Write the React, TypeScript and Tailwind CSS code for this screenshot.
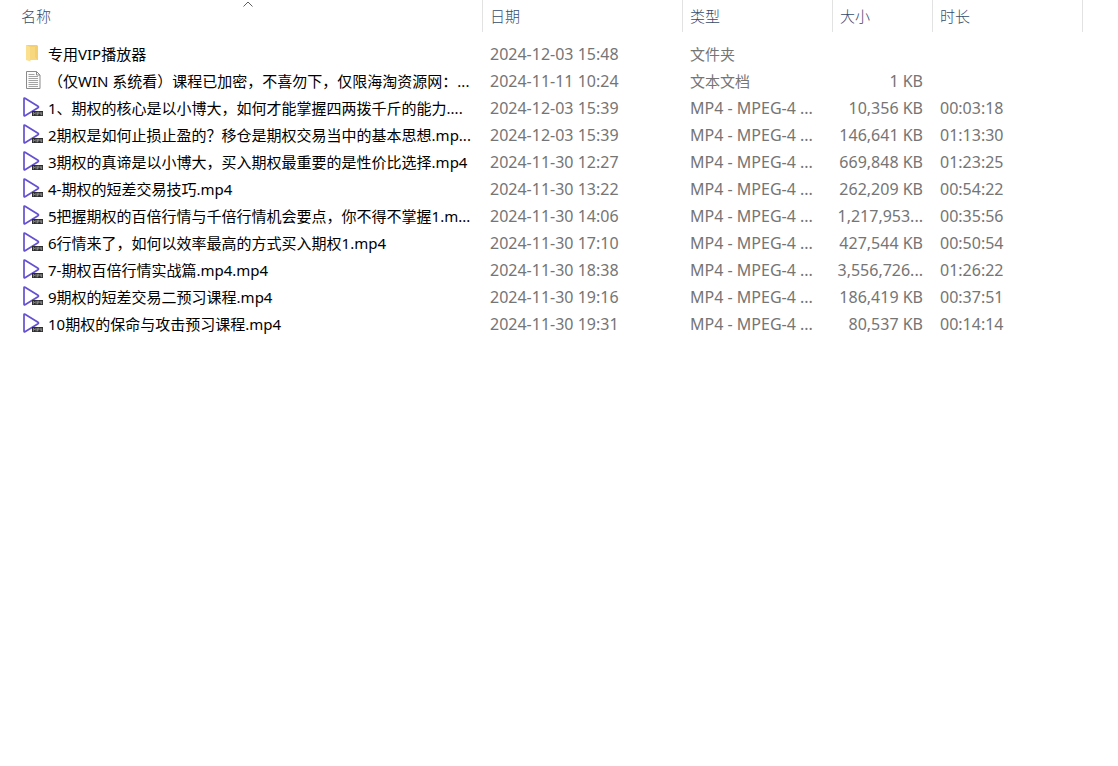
import clsx from 'clsx'

type Kind = 'folder' | 'text' | 'video'

type FileRow = {
  kind: Kind
  name: string
  date: string
  size: string
  duration: string
}

const files: FileRow[] = [
  { kind: 'folder', name: '专用VIP播放器', date: '2024-12-03 15:48', size: '', duration: '' },
  { kind: 'text', name: '（仅WIN 系统看）课程已加密，不喜勿下，仅限海淘资源网：...', date: '2024-11-11 10:24', size: '1 KB', duration: '' },
  { kind: 'video', name: '1、期权的核心是以小博大，如何才能掌握四两拨千斤的能力....', date: '2024-12-03 15:39', size: '10,356 KB', duration: '00:03:18' },
  { kind: 'video', name: '2期权是如何止损止盈的？移仓是期权交易当中的基本思想.mp...', date: '2024-12-03 15:39', size: '146,641 KB', duration: '01:13:30' },
  { kind: 'video', name: '3期权的真谛是以小博大，买入期权最重要的是性价比选择.mp4', date: '2024-11-30 12:27', size: '669,848 KB', duration: '01:23:25' },
  { kind: 'video', name: '4-期权的短差交易技巧.mp4', date: '2024-11-30 13:22', size: '262,209 KB', duration: '00:54:22' },
  { kind: 'video', name: '5把握期权的百倍行情与千倍行情机会要点，你不得不掌握1.m...', date: '2024-11-30 14:06', size: '1,217,953...', duration: '00:35:56' },
  { kind: 'video', name: '6行情来了，如何以效率最高的方式买入期权1.mp4', date: '2024-11-30 17:10', size: '427,544 KB', duration: '00:50:54' },
  { kind: 'video', name: '7-期权百倍行情实战篇.mp4.mp4', date: '2024-11-30 18:38', size: '3,556,726...', duration: '01:26:22' },
  { kind: 'video', name: '9期权的短差交易二预习课程.mp4', date: '2024-11-30 19:16', size: '186,419 KB', duration: '00:37:51' },
  { kind: 'video', name: '10期权的保命与攻击预习课程.mp4', date: '2024-11-30 19:31', size: '80,537 KB', duration: '00:14:14' },
]

const typeLabel: Record<Kind, string> = {
  folder: '文件夹',
  text: '文本文档',
  video: 'MP4 - MPEG-4 ...',
}

const columns = ['名称', '日期', '类型', '大小', '时长']

function FileIcon({ kind }: { kind: Kind }) {
  return (
    <svg viewBox="0 0 22 23" className="w-[22px] h-[23px] shrink-0" aria-hidden="true">
      {kind === 'folder' && (
        <>
          <path d="M4 2h11l1 1v14H4z" fill="#f3cf70" />
          <path d="M4 2l4.500 2v14.500L4 17z" fill="#fbe08f" />
          <path d="M8.500 4H13v10l2.500 3h-7z" fill="#f8d87e" />
        </>
      )}
      {kind === 'text' && (
        <>
          <path d="M4.500 1.500h10l3.500 3.500v13.500H4.500z" fill="#fbfbfb" stroke="#8a8a8a" />
          <path d="M14.500 1.500V5H18" fill="none" stroke="#8a8a8a" />
          <path d="M6.500 4.500h6M6.500 6.500H16M6.500 8.500H16M6.500 10.500H16M6.500 12.500H16M6.500 14.500H16M6.500 16.500H16" stroke="#a3a3a3" />
        </>
      )}
      {kind === 'video' && (
        <>
          <path
            d="M2 1.700Q2 .8 3 1.300L16 9.300Q17 10 16 10.700L3 18.700Q2 19.200 2 18.300z"
            fill="#fff"
            stroke="#6650d2"
            strokeWidth="1.700"
            strokeLinejoin="round"
          />
          <path d="M10 14h11v5H10z" fill="#2c2c2e" />
          <path d="M11.500 18.300v-3l1.300 1.500 1.300-1.500v3M15.500 18.300v-3H17v1.600h-1.500M18.300 15v2.100h1.700M19.700 15v3.300" fill="none" stroke="#b5b5b5" strokeWidth=".6" />
        </>
      )}
    </svg>
  )
}

export default function App() {
  return (
    <main className="min-h-screen bg-white pl-3.5 pr-[35px] text-[15px] font-['Noto_Sans','Noto_Sans_CJK_SC',sans-serif]">
      <table className="w-full table-fixed border-separate border-spacing-0 whitespace-nowrap text-left">
        <colgroup>
          <col />
          <col className="w-[200px]" />
          <col className="w-[150px]" />
          <col className="w-[100px]" />
          <col className="w-[150px]" />
        </colgroup>

        {/* Column headers, sorted by name */}
        <thead>
          <tr>
            {columns.map((label, i) => (
              <th key={label} className="relative h-8 p-0 border-r border-[#e2e2e2] font-light text-[#364b6b]">
                {i === 0 && (
                  <svg viewBox="0 0 10 6" className="absolute top-px left-1/2 -translate-x-1/2 w-2.5 h-1.5" aria-hidden="true">
                    <path d="M.5 5.500L5 1l4.500 4.500" fill="none" stroke="#5f5f5f" />
                  </svg>
                )}
                <button type="button" className="block w-full h-8 pl-[7px] text-left leading-8">
                  {label}
                </button>
              </th>
            ))}
          </tr>
        </thead>

        <tbody className="before:block before:h-[9px] text-[#757575]">
          {files.map((file) => (
            <tr key={file.name}>
              <td className="h-[27px] p-0 pl-2 text-black">
                <div className="flex items-center gap-1">
                  <FileIcon kind={file.kind} />
                  <span className="leading-[27px]">{file.name}</span>
                </div>
              </td>
              <td className="h-[27px] p-0 pl-[7px] text-base leading-[27px]">{file.date}</td>
              <td className={clsx('h-[27px] p-0 pl-[7px]', file.kind === 'video' ? 'text-base leading-[27px]' : 'leading-[27px]')}>
                {typeLabel[file.kind]}
              </td>
              <td className="h-[27px] p-0 pr-2.5 text-right text-base leading-[27px]">{file.size}</td>
              <td className="h-[27px] p-0 pl-[7px] text-base leading-[27px]">{file.duration}</td>
            </tr>
          ))}
        </tbody>
      </table>
    </main>
  )
}
